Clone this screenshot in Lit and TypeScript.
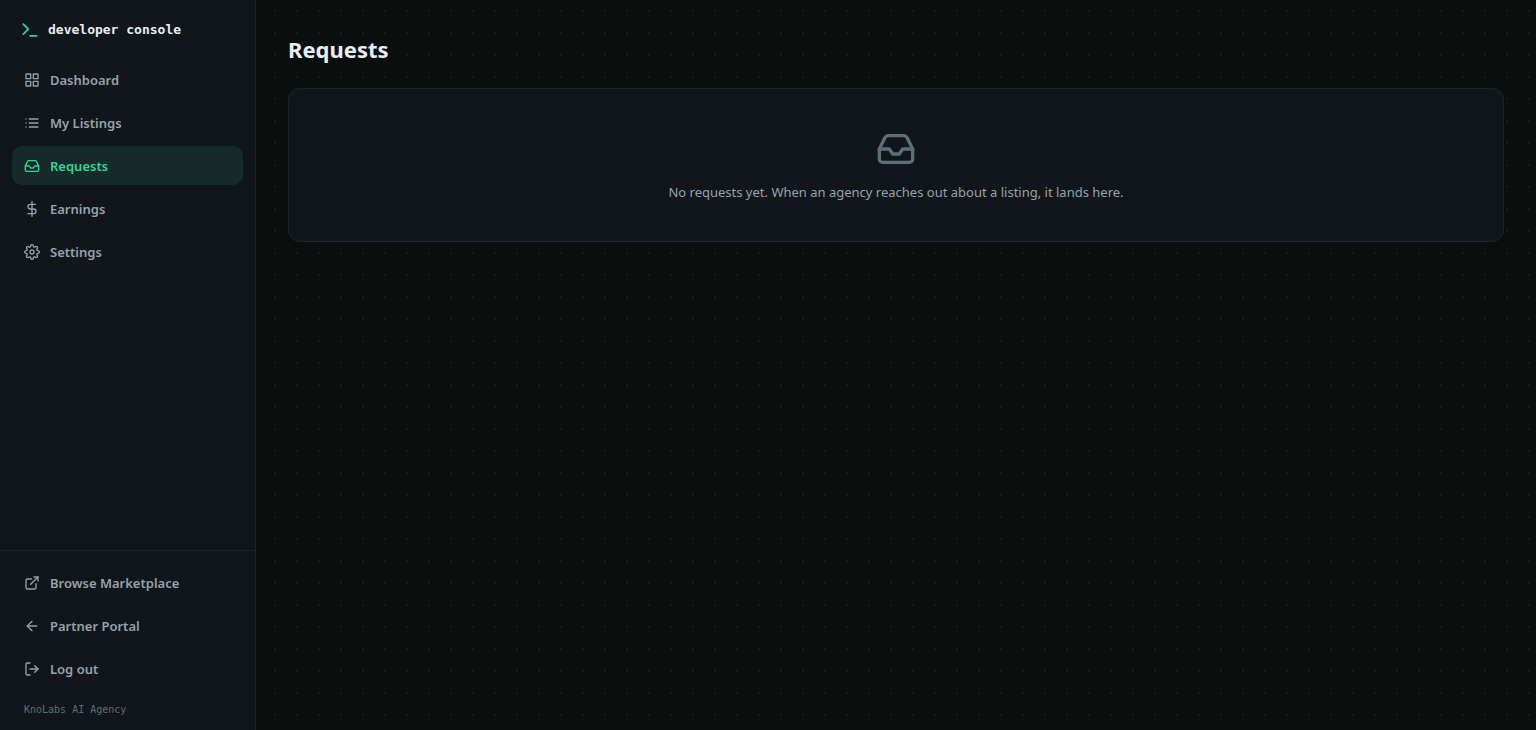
import { LitElement, html, css, svg } from "lit";
import { customElement, property } from "lit/decorators.js";
import { classMap } from "lit/directives/class-map.js";

const glyphs: Record<string, unknown> = {
  terminal: svg`<polyline points="4 17 10 11 4 5" /><line x1="12" y1="19" x2="20" y2="19" />`,
  grid: svg`<rect x="3" y="3" width="7" height="7" /><rect x="14" y="3" width="7" height="7" /><rect x="14" y="14" width="7" height="7" /><rect x="3" y="14" width="7" height="7" />`,
  list: svg`<line x1="8" y1="6" x2="21" y2="6" /><line x1="8" y1="12" x2="21" y2="12" /><line x1="8" y1="18" x2="21" y2="18" /><line x1="3" y1="6" x2="3.01" y2="6" /><line x1="3" y1="12" x2="3.01" y2="12" /><line x1="3" y1="18" x2="3.01" y2="18" />`,
  inbox: svg`<polyline points="22 12 16 12 14 15 10 15 8 12 2 12" /><path d="M5.45 5.11 2 12v6a2 2 0 0 0 2 2h16a2 2 0 0 0 2-2v-6l-3.45-6.89A2 2 0 0 0 16.76 4H7.24a2 2 0 0 0-1.79 1.11z" />`,
  dollar: svg`<line x1="12" y1="1" x2="12" y2="23" /><path d="M17 5H9.5a3.5 3.5 0 0 0 0 7h5a3.5 3.5 0 0 1 0 7H6" />`,
  gear: svg`<circle cx="12" cy="12" r="3" /><path d="M19.4 15a1.65 1.65 0 0 0 .33 1.82l.06.06a2 2 0 0 1 0 2.83 2 2 0 0 1-2.83 0l-.06-.06a1.65 1.65 0 0 0-1.82-.33 1.65 1.65 0 0 0-1 1.51V21a2 2 0 0 1-2 2 2 2 0 0 1-2-2v-.09A1.65 1.65 0 0 0 9 19.4a1.65 1.65 0 0 0-1.82.33l-.06.06a2 2 0 0 1-2.83 0 2 2 0 0 1 0-2.83l.06-.06a1.65 1.65 0 0 0 .33-1.82 1.65 1.65 0 0 0-1.51-1H3a2 2 0 0 1-2-2 2 2 0 0 1 2-2h.09A1.65 1.65 0 0 0 4.6 9a1.65 1.65 0 0 0-.33-1.82l-.06-.06a2 2 0 0 1 0-2.83 2 2 0 0 1 2.83 0l.06.06a1.65 1.65 0 0 0 1.82.33H9a1.65 1.65 0 0 0 1-1.51V3a2 2 0 0 1 2-2 2 2 0 0 1 2 2v.09a1.65 1.65 0 0 0 1 1.51 1.65 1.65 0 0 0 1.82-.33l.06-.06a2 2 0 0 1 2.83 0 2 2 0 0 1 0 2.83l-.06.06a1.65 1.65 0 0 0-.33 1.82V9a1.65 1.65 0 0 0 1.51 1H21a2 2 0 0 1 2 2 2 2 0 0 1-2 2h-.09a1.65 1.65 0 0 0-1.51 1z" />`,
  external: svg`<path d="M18 13v6a2 2 0 0 1-2 2H5a2 2 0 0 1-2-2V8a2 2 0 0 1 2-2h6" /><polyline points="15 3 21 3 21 9" /><line x1="10" y1="14" x2="21" y2="3" />`,
  back: svg`<line x1="19" y1="12" x2="5" y2="12" /><polyline points="12 19 5 12 12 5" />`,
  logout: svg`<path d="M9 21H5a2 2 0 0 1-2-2V5a2 2 0 0 1 2-2h4" /><polyline points="16 17 21 12 16 7" /><line x1="21" y1="12" x2="9" y2="12" />`,
};

@customElement("line-icon")
export class LineIcon extends LitElement {
  @property() name = "grid";

  static styles = css`
    :host {
      display: block;
      flex: none;
      width: 16px;
      height: 16px;
    }
    .glyph {
      display: block;
      width: 100%;
      height: 100%;
      fill: none;
      stroke: currentColor;
      stroke-width: 2;
      stroke-linecap: round;
      stroke-linejoin: round;
    }
  `;

  render() {
    return html`<svg class="glyph" viewBox="0 0 24 24" aria-hidden="true">${glyphs[this.name]}</svg>`;
  }
}

interface NavItem {
  label: string;
  icon: string;
  active?: boolean;
}

const mainItems: NavItem[] = [
  { label: "Dashboard", icon: "grid" },
  { label: "My Listings", icon: "list" },
  { label: "Requests", icon: "inbox", active: true },
  { label: "Earnings", icon: "dollar" },
  { label: "Settings", icon: "gear" },
];

const footerItems: NavItem[] = [
  { label: "Browse Marketplace", icon: "external" },
  { label: "Partner Portal", icon: "back" },
];

@customElement("app-root")
export class AppRoot extends LitElement {
  static styles = css`
    :host {
      display: grid;
      grid-template-columns: 256px minmax(0, 1fr);
      min-height: 100vh;
      box-sizing: border-box;
      background-color: #0a0e0d;
      background-image: radial-gradient(circle, #151a1a 1px, transparent 1px);
      background-size: 22px 22px;
      color: #e6edf3;
      font-family: "Noto Sans", "Open Sans", sans-serif;
      font-size: 13px;
      line-height: 18px;
    }
    .sidebar {
      display: flex;
      flex-direction: column;
      background: #11161a;
      border-right: 1px solid #1c2529;
    }
    .brand {
      display: flex;
      align-items: center;
      gap: 8px;
      padding: 20px 20px 16px;
      font: 700 13px/20px "DejaVu Sans Mono", monospace;
      color: #e6edf3;
    }
    .brand line-icon {
      width: 20px;
      height: 20px;
      color: #34d399;
    }
    .nav {
      display: flex;
      flex-direction: column;
      gap: 4px;
      padding: 4px 12px 13px;
    }
    .main-nav {
      flex: 1;
    }
    .foot {
      border-top: 1px solid #1c2529;
      padding-top: 12px;
    }
    .item {
      display: flex;
      align-items: center;
      gap: 10px;
      box-sizing: border-box;
      width: 100%;
      margin: 0;
      padding: 11px 12px 10px;
      border: 0;
      border-radius: 10px;
      background: none;
      color: #94a3ad;
      font: inherit;
      font-weight: 600;
      text-align: left;
      text-decoration: none;
      cursor: pointer;
    }
    .item.active {
      background: #162b29;
      color: #34d399;
    }
    .agency {
      margin: 0;
      padding: 11px 12px 0;
      font: 10px/14px "DejaVu Sans Mono", monospace;
      color: #5f6d76;
    }
    .content {
      padding: 32px;
    }
    .title {
      margin: 0 0 22px;
      font-size: 22px;
      line-height: 34px;
      font-weight: 700;
    }
    .empty {
      display: flex;
      flex-direction: column;
      align-items: center;
      gap: 12px;
      padding: 40px 24px 38px;
      border: 1px solid #1c2529;
      border-radius: 12px;
      background: #11161a;
      color: #94a3ad;
    }
    .empty line-icon {
      width: 40px;
      height: 40px;
      color: #5f6f77;
    }
    .message {
      margin: 0;
      line-height: 22px;
      text-align: center;
    }
  `;

  private link(item: NavItem) {
    return html`<a
      class=${classMap({ item: true, active: !!item.active })}
      href="#"
      aria-current=${item.active ? "page" : "false"}
      ><line-icon name=${item.icon}></line-icon>${item.label}</a
    >`;
  }

  render() {
    return html`
      <aside class="sidebar">
        <div class="brand"><line-icon name="terminal"></line-icon>developer console</div>
        <nav class="nav main-nav" aria-label="Main">${mainItems.map((i) => this.link(i))}</nav>
        <div class="nav foot">
          ${footerItems.map((i) => this.link(i))}
          <button class="item" type="button"><line-icon name="logout"></line-icon>Log out</button>
          <p class="agency">KnoLabs AI Agency</p>
        </div>
      </aside>
      <main class="content">
        <h1 class="title">Requests</h1>
        <section class="empty">
          <line-icon name="inbox"></line-icon>
          <p class="message">No requests yet. When an agency reaches out about a listing, it lands here.</p>
        </section>
      </main>
    `;
  }
}
